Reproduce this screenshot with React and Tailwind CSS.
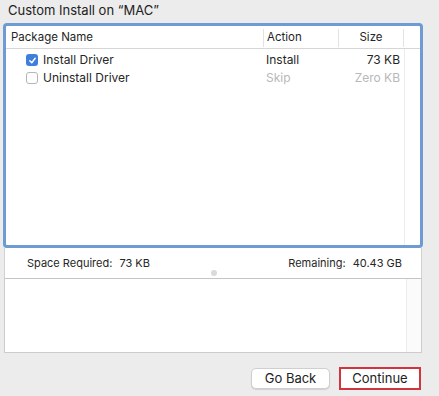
export default function App() {
  const rows = [
    { name: "Install Driver", action: "Install", size: "73 KB", checked: true },
    { name: "Uninstall Driver", action: "Skip", size: "Zero KB", checked: false },
  ];

  return (
    <div className="w-[439px] h-[396px] bg-[#ececec] text-[#1f1f1f] overflow-hidden" style={{ fontFamily: 'Inter, "Liberation Sans", sans-serif' }}>
      <div className="pl-[8px] pt-[2px] h-[23px] text-[13px] leading-[17px] text-[#222]">Custom Install on “MAC”</div>

      <div className="ml-[3px] w-[420px]">
        {/* package table with focus ring */}
        <div className="h-[225px] bg-white border-[3px] border-[#6f9bd4] rounded-[4px] flex flex-col">
          <div className="flex h-[23px] pt-[2px] border-b border-[#d6d6d6] text-[11.5px] text-[#262626] items-center">
            <div className="w-[257px] pl-[5px]">Package Name</div>
            <div className="w-[75px] h-[18px] border-l border-[#e2e2e2] pl-[3px] flex items-center">Action</div>
            <div className="w-[66px] h-[18px] border-x border-[#e2e2e2] flex items-center justify-center">Size</div>
            <div className="flex-1" />
          </div>
          <div className="flex flex-1">
            <div className="w-[398px] pt-[2px]">
              {rows.map((r) => (
                <div key={r.name} className="flex h-[18px] items-center text-[12px]">
                  <div className="w-[257px] flex items-center pl-[20px]">
                    {r.checked ? (
                      <span className="w-[12px] h-[12px] rounded-[3px] bg-[#3f7fdb] flex items-center justify-center">
                        <svg width="9" height="9" viewBox="0 0 10 10">
                          <path d="M2 5.3 L4.2 7.5 L8 2.5" fill="none" stroke="white" strokeWidth="1.6" strokeLinecap="round" strokeLinejoin="round" />
                        </svg>
                      </span>
                    ) : (
                      <span className="w-[12px] h-[12px] rounded-[3px] border border-[#b5b5b5] bg-white" />
                    )}
                    <span className="ml-[5px] text-[#262626]">{r.name}</span>
                  </div>
                  <div className={`w-[75px] pl-[3px] ${r.checked ? "text-[#262626]" : "text-[#b8b8b8]"}`}>{r.action}</div>
                  <div className={`w-[66px] text-right pr-[4px] ${r.checked ? "text-[#262626]" : "text-[#b8b8b8]"}`}>{r.size}</div>
                </div>
              ))}
            </div>
            <div className="flex-1 border-l border-[#ececec]" />
          </div>
        </div>

        {/* space info */}
        <div className="mx-[1px] h-[31px] bg-white border-x border-[#d2d2d2] border-b border-b-[#c4c4c4] relative flex items-center text-[11px] text-[#262626]">
          <div className="pl-[22px] flex-1">
            Space Required:<span className="ml-[7px]">73 KB</span>
          </div>
          <div className="pr-[19px]">
            Remaining:<span className="ml-[7px]">40.43 GB</span>
          </div>
          <span className="absolute left-[206px] bottom-[2px] w-[6px] h-[6px] rounded-full bg-[#dadada]" />
        </div>

        {/* notes area */}
        <div className="mx-[1px] h-[74px] bg-white border-x border-b border-[#cccccc] flex">
          <div className="flex-1" />
          <div className="w-[15px] border-l border-[#ececec] bg-[#fbfbfb]" />
        </div>
      </div>

      <div className="flex justify-end gap-[9px] pr-[18px] mt-[15px] text-[13px] text-[#222]">
        <button className="w-[79px] h-[21px] bg-white rounded-[5px] border border-[#cfcfcf] shadow-[0_1px_1px_rgba(0,0,0,0.12)] leading-none">Go Back</button>
        <button className="w-[82px] h-[23px] -mt-[1px] bg-white border-2 border-[#d1343d] leading-none">Continue</button>
      </div>
    </div>
  );
}
